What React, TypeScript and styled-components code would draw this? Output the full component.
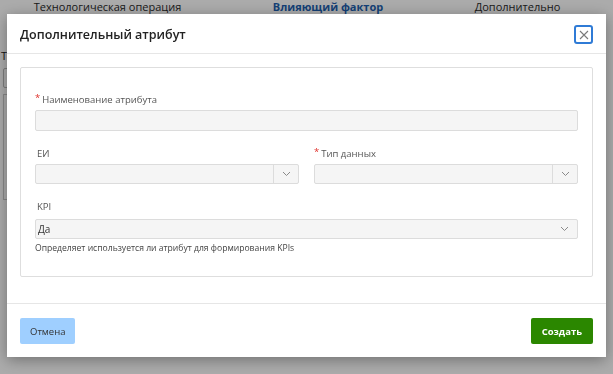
import * as React from 'react';
import styled, { createGlobalStyle } from 'styled-components';

const GlobalStyle = createGlobalStyle`
  html, body {
    margin: 0;
    padding: 0;
    background: #ffffff;
    font-family: 'Open Sans', 'Noto Sans', sans-serif;
  }
  * { box-sizing: border-box; }
`;

const Chevron = () => (
  <svg width="9" height="6" viewBox="0 0 9 6">
    <path d="M1 1 L4.5 4.5 L8 1" fill="none" stroke="#8a8a8a" strokeWidth="1" />
  </svg>
);

const CloseIcon = () => (
  <svg width="10" height="10" viewBox="0 0 10 10">
    <path d="M1 1 L9 9 M9 1 L1 9" stroke="#7a7a7a" strokeWidth="1.1" />
  </svg>
);

const App = () => {
  return (
    <>
      <GlobalStyle />
      <Page>
        <Tabs>
          <Tab>Технологическая операция</Tab>
          <Tab active>Влияющий фактор</Tab>
          <Tab>Дополнительно</Tab>
        </Tabs>
        <BackContent>
          <BackLabel>Тип</BackLabel>
          <BackInput />
          <BackPanel />
        </BackContent>
      </Page>

      <Overlay>
        <Modal>
          <Header>
            <Title>Дополнительный атрибут</Title>
            <CloseButton>
              <CloseIcon />
            </CloseButton>
          </Header>

          <Body>
            <Card>
              <Field>
                <Label required>Наименование атрибута</Label>
                <Input />
              </Field>

              <Row>
                <Field>
                  <Label gap={3}>ЕИ</Label>
                  <Select>
                    <SelectValue />
                    <SelectButton divided>
                      <Chevron />
                    </SelectButton>
                  </Select>
                </Field>
                <Field>
                  <Label required gap={3}>Тип данных</Label>
                  <Select>
                    <SelectValue />
                    <SelectButton divided>
                      <Chevron />
                    </SelectButton>
                  </Select>
                </Field>
              </Row>

              <Field>
                <Label gap={5}>KPI</Label>
                <Select>
                  <SelectValue>Да</SelectValue>
                  <SelectButton>
                    <Chevron />
                  </SelectButton>
                </Select>
                <Hint>Определяет используется ли атрибут для формирования KPIs</Hint>
              </Field>
            </Card>
          </Body>

          <Footer>
            <Button kind="cancel">Отмена</Button>
            <Button kind="primary">Создать</Button>
          </Footer>
        </Modal>
      </Overlay>
    </>
  );
};

export default App;

const Page = styled.div`
  width: 613px;
  height: 374px;
  overflow: hidden;
  background: #fff;
`;

const Tabs = styled.div`
  display: grid;
  grid-template-columns: 215px 226px 153px;
  height: 14px;
  align-items: center;
`;

const Tab = styled.div<{ active?: boolean }>`
  text-align: center;
  font-size: 11px;
  line-height: 14px;
  margin-top: -1px;
  color: ${p => (p.active ? '#1d5fb0' : '#2a2a2a')};
  font-weight: ${p => (p.active ? 700 : 400)};
`;

const BackContent = styled.div`
  display: flex;
  flex-direction: column;
  padding: 35px 0 0 1px;
  gap: 6px;
`;

const BackLabel = styled.div`
  font-size: 11px;
  line-height: 13px;
  color: #222;
`;

const BackInput = styled.div`
  margin-left: 2px;
  width: 120px;
  height: 20px;
  border: 1px solid #bbb;
  border-radius: 2px;
`;

const BackPanel = styled.div`
  margin-left: 2px;
  width: 200px;
  height: 106px;
  border: 1px solid #ccc;
`;

const Overlay = styled.div`
  position: fixed;
  inset: 0;
  background: rgba(0, 0, 0, 0.33);
  padding: 14px 7px;
`;

const Modal = styled.div`
  width: 599px;
  height: 343px;
  background: #fff;
  box-shadow: 0 3px 14px rgba(0, 0, 0, 0.35);
  display: flex;
  flex-direction: column;
`;

const Header = styled.div`
  height: 40px;
  display: flex;
  align-items: center;
  justify-content: space-between;
  padding: 0 13px;
  border-bottom: 1px solid #e6e6e6;
`;

const Title = styled.div`
  font-size: 12.5px;
  font-weight: 600;
  color: #222;
  margin-top: 2px;
`;

const CloseButton = styled.div`
  width: 19px;
  height: 19px;
  border: 2px solid #2f7bd6;
  border-radius: 3px;
  display: flex;
  align-items: center;
  justify-content: center;
  margin-top: 2px;
`;

const Body = styled.div`
  flex: 1;
  padding: 13px 13px 0;
`;

const Card = styled.div`
  border: 1px solid #dedede;
  border-radius: 2px;
  padding: 25px 14px 21px;
  display: flex;
  flex-direction: column;
  gap: 16px;
`;

const Row = styled.div`
  display: grid;
  grid-template-columns: 1fr 1fr;
  column-gap: 15px;
`;

const Field = styled.div`
  display: flex;
  flex-direction: column;
`;

const Label = styled.div<{ required?: boolean; gap?: number }>`
  font-size: 9.5px;
  line-height: 14px;
  color: #555;
  margin-bottom: ${p => p.gap ?? 3}px;
  &::before {
    content: ${p => (p.required ? "'*'" : "''")};
    color: #e0312b;
    margin-right: 2px;
    font-size: 9.5px;
    position: relative;
    top: -2px;
  }
`;

const Input = styled.div`
  height: 21px;
  background: #f5f5f5;
  border: 1px solid #dcdcdc;
  border-radius: 2px;
`;

const Select = styled.div`
  height: 20px;
  background: #f5f5f5;
  border: 1px solid #dcdcdc;
  border-radius: 2px;
  display: flex;
  align-items: stretch;
`;

const SelectValue = styled.div`
  flex: 1;
  font-size: 10px;
  color: #333;
  line-height: 18px;
  padding-left: 2px;
`;

const SelectButton = styled.div<{ divided?: boolean }>`
  width: 25px;
  display: flex;
  align-items: center;
  justify-content: center;
  border-left: ${p => (p.divided ? '1px solid #dcdcdc' : 'none')};
`;

const Hint = styled.div`
  margin-top: 3px;
  font-size: 8.6px;
  line-height: 13px;
  color: #444;
`;

const Footer = styled.div`
  display: flex;
  justify-content: space-between;
  align-items: center;
  padding: 14px 13px 13px;
  border-top: 1px solid #e6e6e6;
`;

const Button = styled.div<{ kind: 'cancel' | 'primary' }>`
  height: 26px;
  padding: 0 ${p => (p.kind === 'primary' ? 11 : 10)}px;
  display: flex;
  align-items: center;
  border-radius: 2px;
  font-size: 9.5px;
  font-weight: ${p => (p.kind === 'primary' ? 700 : 400)};
  color: ${p => (p.kind === 'primary' ? '#fff' : '#333')};
  background: ${p => (p.kind === 'primary' ? '#2b8700' : '#9fcfff')};
`;
